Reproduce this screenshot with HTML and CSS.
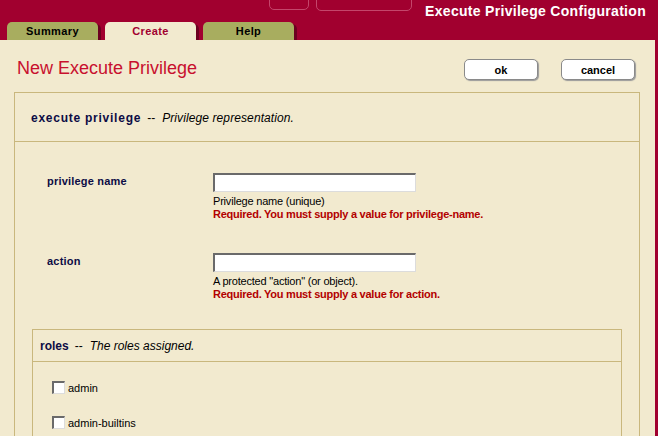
FILE: index.html
```html
<!DOCTYPE html>
<html>
<head>
<meta charset="utf-8">
<link rel="stylesheet" href="styles.css">
</head>
<body>
<div class="page">
  <header class="top">
    <div class="top-row">
      <span class="deco deco-a"></span>
      <span class="deco deco-b"></span>
      <h1 class="app-title">Execute Privilege Configuration</h1>
    </div>
    <nav class="tabs">
      <span class="tab">Summary</span>
      <span class="tab tab-active">Create</span>
      <span class="tab">Help</span>
    </nav>
  </header>
  <main class="main">
    <div class="title-row">
      <h2 class="page-title">New Execute Privilege</h2>
      <div class="actions">
        <button class="btn">ok</button>
        <button class="btn">cancel</button>
      </div>
    </div>
    <section class="panel">
      <div class="panel-head">
        <span class="ptitle">execute privilege</span><span class="dash">--</span><span class="pdesc">Privilege representation.</span>
      </div>
      <div class="panel-body">
        <div class="field">
          <label class="flabel">privilege name</label>
          <div class="fctl">
            <span class="input"></span>
            <div class="help">Privilege name (unique)</div>
            <div class="err">Required. You must supply a value for privilege-name.</div>
          </div>
        </div>
        <div class="field">
          <label class="flabel">action</label>
          <div class="fctl">
            <span class="input"></span>
            <div class="help">A protected "action" (or object).</div>
            <div class="err">Required. You must supply a value for action.</div>
          </div>
        </div>
        <section class="subpanel">
          <div class="sub-head">
            <span class="stitle">roles</span><span class="dash">--</span><span class="sdesc">The roles assigned.</span>
          </div>
          <div class="sub-body">
            <div class="check"><span class="box"></span><span class="clabel">admin</span></div>
            <div class="check"><span class="box"></span><span class="clabel">admin-builtins</span></div>
          </div>
        </section>
      </div>
    </section>
  </main>
</div>
</body>
</html>
```
FILE: styles.css
```css
html, body {
  margin: 0;
  padding: 0;
}
body {
  background: #a1002f;
  font-family: "Liberation Sans", Arial, sans-serif;
  width: 658px;
  height: 436px;
  overflow: hidden;
}
.page {
  width: 658px;
  height: 436px;
  display: flex;
  flex-direction: column;
}
.top {
  height: 40px;
  flex: none;
  display: grid;
  grid-template-rows: 22px 18px;
}
.top-row {
  display: flex;
  align-items: flex-start;
  padding-left: 269px;
  padding-right: 12px;
  overflow: hidden;
}
.deco {
  display: block;
  height: 20px;
  margin-top: -10px;
  border: 1px solid #c4466b;
  border-radius: 5px;
  box-sizing: border-box;
}
.deco-a { width: 40px; }
.deco-b { width: 96px; margin-left: 7px; height: 21px; }
.app-title {
  margin: 0 0 0 auto;
  color: #fff;
  font-size: 14px;
  font-weight: bold;
  line-height: 16px;
  padding-top: 3px;
  letter-spacing: 0.3px;
}
.tabs {
  display: flex;
  gap: 7px;
  padding-left: 7px;
  align-items: flex-end;
}
.tab {
  width: 91px;
  height: 18px;
  box-sizing: border-box;
  background: #a8ad5f;
  border-radius: 5px 5px 0 0;
  box-shadow: 3px 2px 0 #6c0020;
  font-size: 11px;
  font-weight: bold;
  color: #000;
  text-align: center;
  line-height: 19px;
  letter-spacing: 0.4px;
}
.tab-active {
  background: #f2eacf;
  color: #a1002f;
}
.main {
  background: #f2eacf;
  width: 655px;
  flex: 1;
  min-height: 0;
  box-sizing: border-box;
  padding: 0 15px 0 14px;
  display: flex;
  flex-direction: column;
}
.title-row {
  height: 52px;
  flex: none;
  display: flex;
  align-items: flex-start;
  justify-content: space-between;
}
.page-title {
  margin: 18px 0 0 3px;
  font-size: 18px;
  line-height: 21px;
  font-weight: normal;
  color: #c8102e;
}
.actions {
  display: flex;
  gap: 23px;
  margin: 19px 5px 0 0;
}
.btn {
  width: 74px;
  height: 21px;
  background: #fff;
  border: 1px solid #8a8a8a;
  border-radius: 5px;
  box-shadow: 1px 1px 1px #9a9a9a;
  font-family: "Liberation Sans", Arial, sans-serif;
  font-size: 11px;
  font-weight: bold;
  color: #000;
  padding: 0;
}
.panel {
  border: 1px solid #c9b77d;
  border-bottom: none;
  flex: 1;
  min-height: 0;
  display: flex;
  flex-direction: column;
}
.panel-head {
  height: 49px;
  flex: none;
  border-bottom: 1px solid #c9b77d;
  display: flex;
  align-items: center;
  padding-left: 16px;
  padding-top: 2px;
  box-sizing: border-box;
}
.ptitle {
  font-size: 12px;
  font-weight: bold;
  color: #0c0c45;
  letter-spacing: 0.75px;
}
.dash {
  font-size: 12px;
  color: #000;
  margin: 0 7px 0 6px;
}
.pdesc {
  font-size: 12px;
  font-style: italic;
  color: #000;
  letter-spacing: 0.1px;
}
.panel-body {
  padding: 31px 17px 0 17px;
  flex: 1;
  min-height: 0;
  display: flex;
  flex-direction: column;
}
.field {
  display: grid;
  grid-template-columns: 166px 1fr;
  padding-left: 15px;
  height: 80px;
  flex: none;
}
.flabel {
  font-size: 11px;
  font-weight: bold;
  color: #0c0c45;
  padding-top: 2px;
  line-height: 13px;
  letter-spacing: 0.2px;
}
.input {
  display: block;
  width: 203px;
  height: 19px;
  box-sizing: border-box;
  background: #fff;
  border-style: solid;
  border-width: 2px 1px 1px 2px;
  border-color: #6a6a6a #dcdcdc #dcdcdc #6a6a6a;
}
.help {
  font-size: 11px;
  color: #000;
  line-height: 13px;
  margin-top: 3px;
  letter-spacing: -0.2px;
}
.err {
  font-size: 11px;
  font-weight: bold;
  color: #b20000;
  line-height: 13px;
  letter-spacing: -0.25px;
}
.subpanel {
  margin-top: -4px;
  border: 1px solid #c9b77d;
  border-bottom: none;
  flex: 1;
  min-height: 0;
}
.sub-head {
  height: 32px;
  border-bottom: 1px solid #c9b77d;
  display: flex;
  align-items: center;
  padding-left: 7px;
  box-sizing: border-box;
}
.stitle {
  font-size: 12px;
  font-weight: bold;
  color: #0c0c45;
}
.sdesc {
  font-size: 12px;
  font-style: italic;
  color: #000;
}
.sub-body {
  padding: 19px 0 0 19px;
  display: flex;
  flex-direction: column;
  gap: 22px;
}
.check {
  display: flex;
  align-items: flex-end;
  height: 13px;
}
.box {
  width: 13px;
  height: 13px;
  box-sizing: border-box;
  background: #fff;
  border-style: solid;
  border-width: 2px 1px 1px 2px;
  border-color: #6a6a6a #dcdcdc #dcdcdc #6a6a6a;
}
.clabel {
  font-size: 11px;
  color: #000;
  margin-left: 3px;
  line-height: 11px;
}
```
